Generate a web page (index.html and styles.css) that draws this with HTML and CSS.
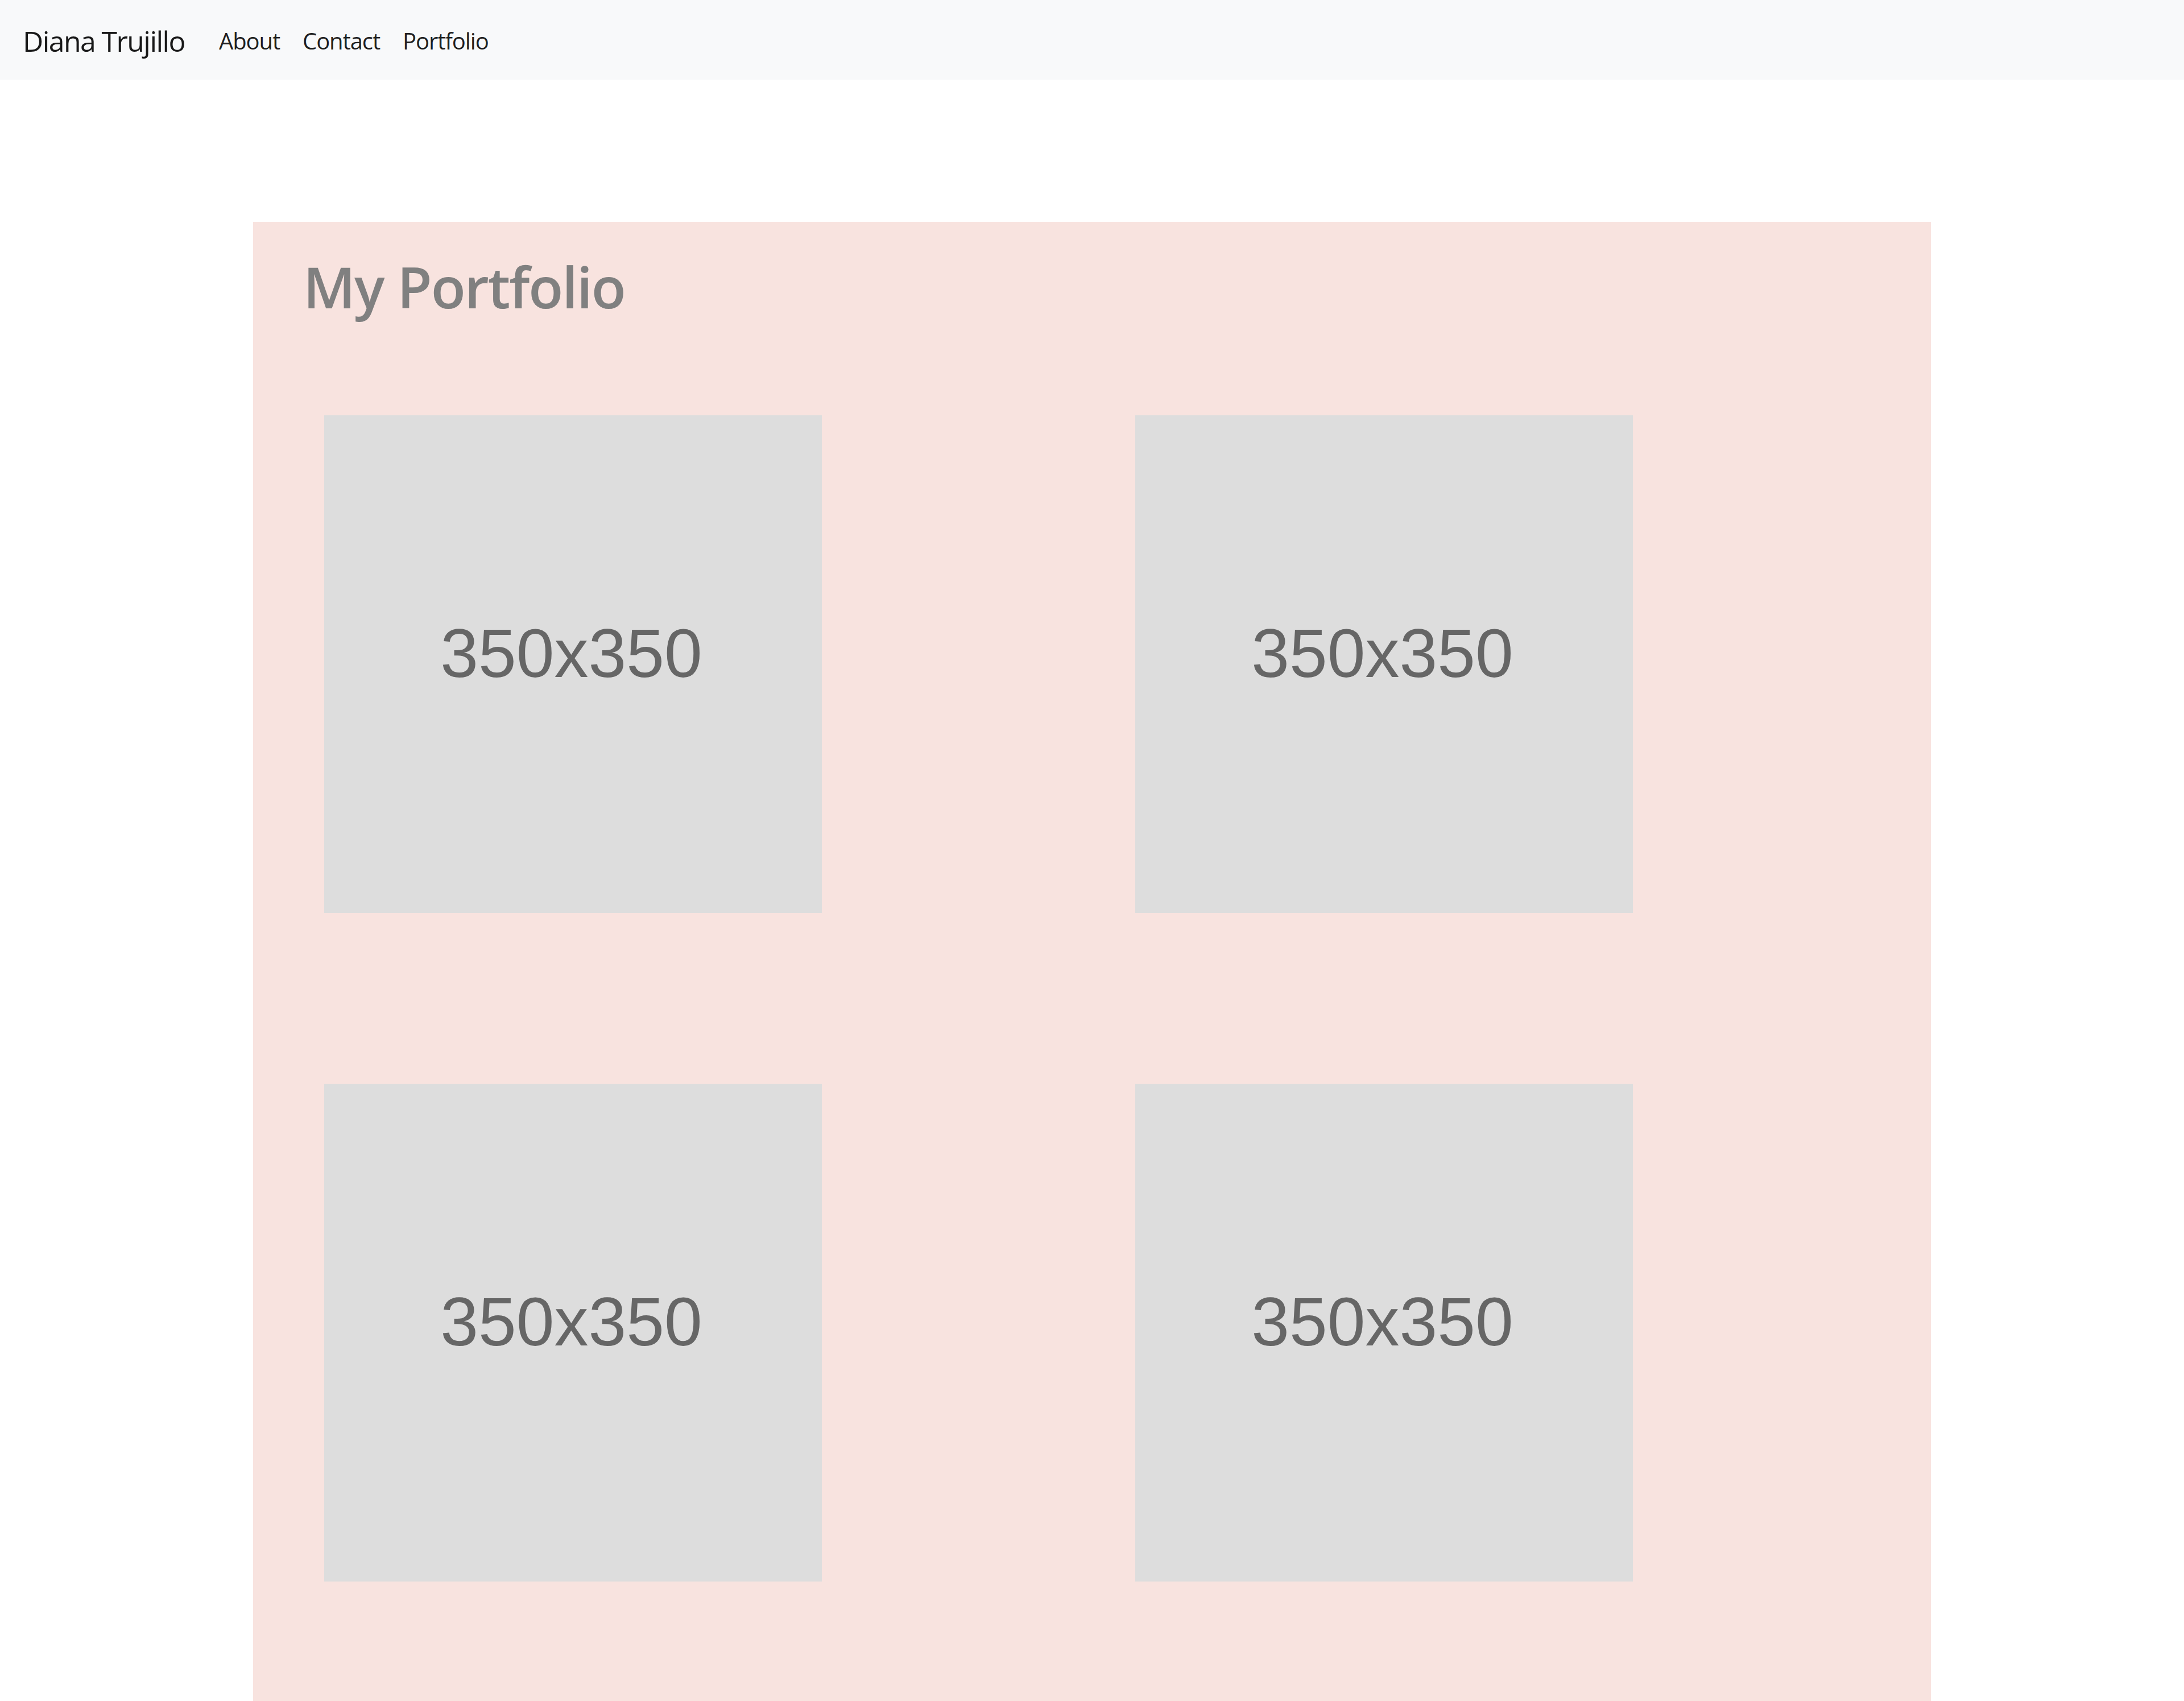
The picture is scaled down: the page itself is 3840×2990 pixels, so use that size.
FILE: index.html
```html
<!DOCTYPE html>
<html lang="en">
<head>
<meta charset="utf-8">
<title>Diana Trujillo - Portfolio</title>
<link rel="stylesheet" href="styles.css">
</head>
<body>
<nav class="navbar">
  <a class="brand" href="#">Diana Trujillo</a>
  <ul class="nav">
    <li><a class="nav-link" href="#">About</a></li>
    <li><a class="nav-link" href="#">Contact</a></li>
    <li><a class="nav-link" href="#">Portfolio</a></li>
  </ul>
</nav>
<main class="main">
  <section class="portfolio">
    <h1 class="title">My Portfolio</h1>
    <div class="grid">
      <div class="thumb"><span>350x350</span></div>
      <div class="thumb"><span>350x350</span></div>
      <div class="thumb"><span>350x350</span></div>
      <div class="thumb"><span>350x350</span></div>
    </div>
  </section>
</main>
</body>
</html>
```
FILE: styles.css
```css
* { box-sizing: border-box; }
body {
  margin: 0;
  font-family: "Open Sans", "Noto Sans", sans-serif;
  color: #212529;
  background: #fff;
}
.navbar {
  display: flex;
  align-items: center;
  height: 140px;
  padding: 22px 40px 18px;
  background: #f8f9fa;
}
.brand {
  font-size: 50px;
  line-height: 75px;
  letter-spacing: -1.6px;
  color: rgba(0,0,0,.9);
  text-decoration: none;
  margin-right: 40px;
}
.nav {
  display: flex;
  list-style: none;
  margin: 0;
  padding: 0;
}
.nav-link {
  display: block;
  padding: 20px;
  font-size: 40px;
  line-height: 60px;
  letter-spacing: -1.1px;
  color: rgba(0,0,0,.9);
  text-decoration: none;
}
.main {
  padding-top: 250px;
}
.portfolio {
  width: 2950px;
  margin: 0 auto;
  background: #f8e3df;
  padding: 53px 0 300px 88px;
}
.title {
  margin: 0;
  font-size: 100px;
  line-height: 120px;
  font-weight: 600;
  letter-spacing: -2.1px;
  color: #808080;
}
.grid {
  display: grid;
  grid-template-columns: 875px 875px;
  column-gap: 551px;
  row-gap: 300px;
  margin: 167px 0 0 37px;
}
.thumb {
  width: 875px;
  height: 875px;
  background: #dddddd;
  display: flex;
  align-items: center;
  justify-content: center;
  padding-bottom: 40px;
  padding-right: 6px;
}
.thumb span {
  font-family: "Liberation Sans", Arial, sans-serif;
  font-size: 120px;
  color: #666666;
  line-height: 1;
}
```
